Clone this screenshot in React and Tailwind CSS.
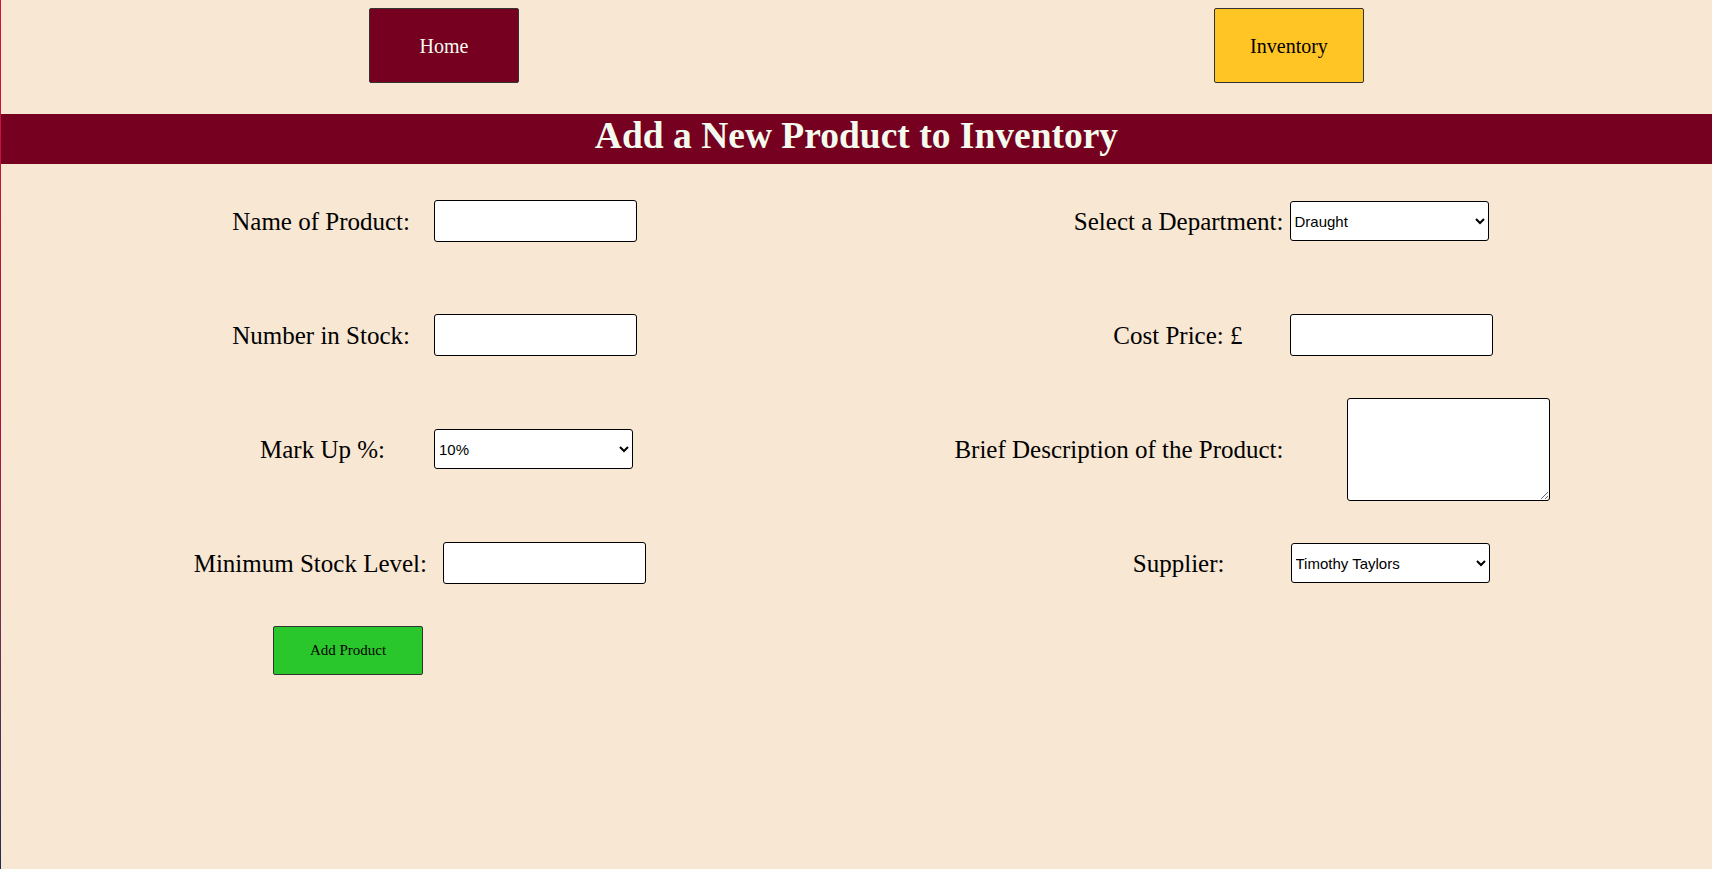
import React from "react";

const serif = { fontFamily: '"Liberation Serif", "Times New Roman", serif' };

const inputCls =
  "h-[42px] w-[203px] shrink-0 rounded-[3px] border border-black bg-white px-1";
const selectCls =
  "h-[40px] w-[199px] shrink-0 rounded-[3px] border border-black bg-white pl-0 text-[15px] text-black [font-family:'Liberation_Sans',Arial,sans-serif]";

const Field = ({ label, labelWidth, gap, children }) => (
  <div className="flex items-center">
    <label
      className="shrink-0 text-right text-[25px] leading-none text-black"
      style={{ width: labelWidth }}
    >
      {label}
    </label>
    <div className="flex items-center" style={{ marginLeft: gap }}>
      {children}
    </div>
  </div>
);

export default function App() {
  return (
    <div className="flex min-h-screen bg-[#f8e7d3]" style={serif}>
      {/* thin gradient edge on the left */}
      <div className="w-px shrink-0 bg-linear-to-b from-[#d0163a] via-[#b0103f] to-[#1f2b5c]" />

      <div className="flex-1">
        {/* Nav */}
        <nav className="flex pt-[8px] pl-[368px]">
          <button className="h-[75px] w-[150px] rounded-[2px] border border-[#333] bg-[#75001f] text-[20px] text-[#f4fbee]">
            Home
          </button>
          <button className="ml-[695px] h-[75px] w-[150px] rounded-[2px] border border-[#333] bg-[#ffc524] text-[20px] text-black">
            Inventory
          </button>
        </nav>

        {/* Title bar */}
        <h1 className="mt-[31px] flex h-[50px] items-center justify-center bg-[#75001f] pb-[6px] text-[37.5px] font-bold leading-none text-[#f4fbee]">
          Add a New Product to Inventory
        </h1>

        {/* Form */}
        <form className="grid grid-cols-2 grid-rows-[repeat(4,114px)] items-center">
          <Field label="Name of Product:" labelWidth={409} gap={24}>
            <input type="text" className={inputCls} />
          </Field>
          <Field label="Select a Department:" labelWidth={427} gap={6}>
            <select className={selectCls} defaultValue="Draught">
              <option>Draught</option>
              <option>Bottled</option>
              <option>Spirits</option>
              <option>Wine</option>
            </select>
          </Field>

          <Field label="Number in Stock:" labelWidth={409} gap={24}>
            <input type="number" className={inputCls} />
          </Field>
          <Field label="Cost Price: £" labelWidth={386} gap={47}>
            <input type="number" className={inputCls} />
          </Field>

          <Field label="Mark Up %:" labelWidth={384} gap={49}>
            <select className={selectCls} defaultValue="10%">
              <option>10%</option>
              <option>20%</option>
              <option>30%</option>
              <option>40%</option>
              <option>50%</option>
            </select>
          </Field>
          <Field label="Brief Description of the Product:" labelWidth={427} gap={63}>
            <textarea className="h-[103px] w-[203px] shrink-0 rounded-[3px] border border-black bg-white" />
          </Field>

          <Field label="Minimum Stock Level:" labelWidth={426} gap={16}>
            <input type="number" className={inputCls} />
          </Field>
          <Field label="Supplier:" labelWidth={368} gap={66}>
            <select className={selectCls} defaultValue="Timothy Taylors">
              <option>Timothy Taylors</option>
              <option>Black Sheep</option>
              <option>Theakston</option>
            </select>
          </Field>
        </form>

        <div className="pl-[272px] pt-[6px]">
          <button
            type="button"
            className="h-[49px] w-[150px] rounded-[2px] border border-[#333] bg-[#2ac72c] text-[15px] text-black"
          >
            Add Product
          </button>
        </div>
      </div>
    </div>
  );
}
